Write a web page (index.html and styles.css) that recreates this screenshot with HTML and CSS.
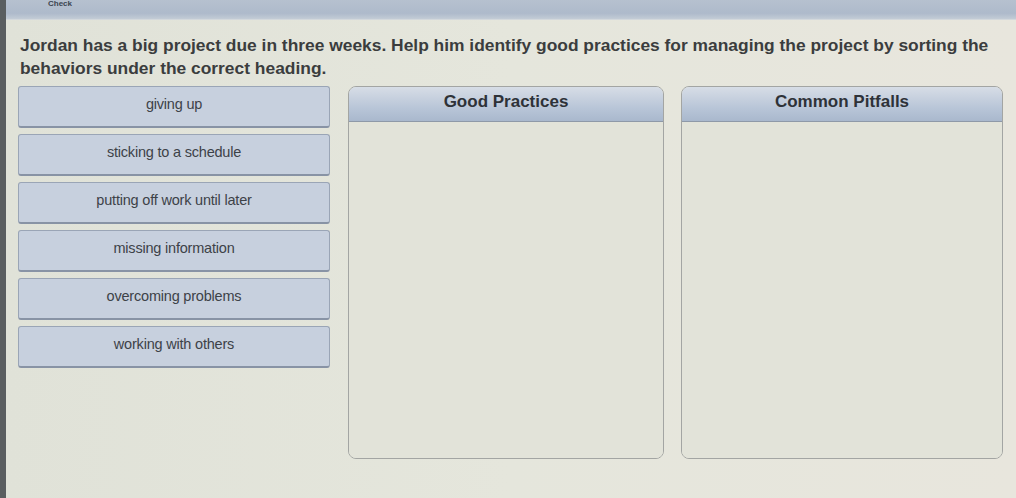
FILE: index.html
```html
<!DOCTYPE html>
<html>
<head>
<meta charset="utf-8">
<link rel="stylesheet" href="styles.css">
</head>
<body>
<div class="frame">
  <div class="topbar"><span class="check">Check</span></div>
  <div class="content">
    <p class="prompt">Jordan has a big project due in three weeks. Help him identify good practices for managing the project by sorting the behaviors under the correct heading.</p>
    <div class="board">
      <div class="tiles">
        <div class="tile">giving up</div>
        <div class="tile">sticking to a schedule</div>
        <div class="tile">putting off work until later</div>
        <div class="tile">missing information</div>
        <div class="tile">overcoming problems</div>
        <div class="tile">working with others</div>
      </div>
      <div class="bin">
        <div class="bin-head">Good Practices</div>
        <div class="bin-body"></div>
      </div>
      <div class="bin">
        <div class="bin-head">Common Pitfalls</div>
        <div class="bin-body"></div>
      </div>
    </div>
  </div>
</div>
</body>
</html>
```
FILE: styles.css
```css
html, body {
  margin: 0;
  padding: 0;
}
body {
  width: 1016px;
  height: 498px;
  overflow: hidden;
  background: #e3e4da;
  font-family: "Liberation Sans", Arial, sans-serif;
}
.frame {
  height: 498px;
  border-left: 6px solid #5a5e60;
  box-sizing: border-box;
  background: linear-gradient(90deg, #e0e2d8 0%, #e5e6dc 50%, #e8e6dd 100%);
}
.topbar {
  height: 20px;
  background: linear-gradient(180deg, #b6c1cf 0%, #aebacb 70%, #c3ccd6 100%);
  border-bottom: 1px solid #d3d8dc;
  padding-left: 42px;
  box-sizing: border-box;
}
.check {
  font-size: 8px;
  color: #3c4550;
  font-weight: bold;
  line-height: 8px;
  display: block;
}
.content {
  padding: 14px 0 0 14px;
}
.prompt {
  margin: 0;
  font-size: 17.4px;
  font-weight: bold;
  color: #3b3d3e;
  line-height: 23px;
  width: 990px;
}
.board {
  display: flex;
  align-items: flex-start;
  margin-top: 6px;
}
.tiles {
  width: 312px;
  display: flex;
  flex-direction: column;
  gap: 6px;
  margin-left: -2px;
}
.tile {
  height: 42px;
  box-sizing: border-box;
  background: #c7d0de;
  border: 1px solid #9aa5b6;
  border-bottom: 2px solid #8893a5;
  border-radius: 3px;
  color: #3d4248;
  font-size: 14.5px;
  letter-spacing: -0.2px;
  display: flex;
  align-items: center;
  justify-content: center;
  padding-bottom: 5px;
}
.bin {
  width: 316px;
  height: 373px;
  box-sizing: border-box;
  border: 1px solid #a3a5a3;
  border-radius: 8px;
  margin-left: 18px;
  display: flex;
  flex-direction: column;
  overflow: hidden;
}
.bin + .bin {
  margin-left: 17px;
  width: 322px;
}
.bin-head {
  height: 35px;
  flex: none;
  background: linear-gradient(180deg, #d7dde6 0%, #b9c6d8 60%, #a9b8cd 100%);
  border-bottom: 1px solid #8e99a8;
  display: flex;
  align-items: center;
  justify-content: center;
  font-size: 17px;
  font-weight: bold;
  color: #2e3238;
  padding-bottom: 5px;
  box-sizing: border-box;
}
.bin-body {
  flex: 1;
  background: #e2e3d9;
}
```
